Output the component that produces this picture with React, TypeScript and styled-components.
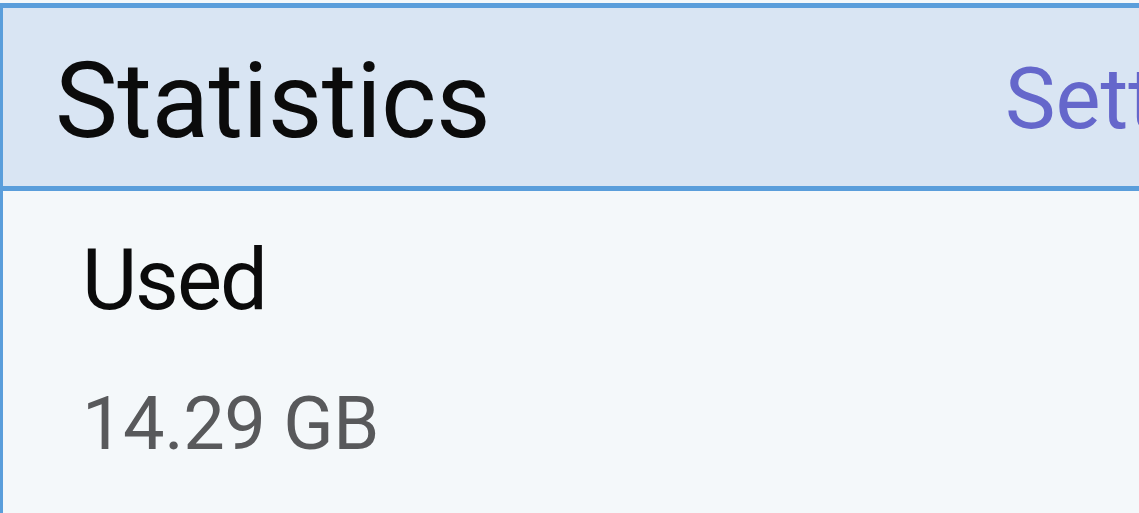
import styled, { createGlobalStyle } from 'styled-components';

const GlobalStyle = createGlobalStyle`
  html, body {
    margin: 0;
    padding: 0;
    background: #f4f8fa;
    overflow: hidden;
  }
  body {
    font-family: Roboto, "Noto Sans", "Liberation Sans", sans-serif;
  }
`;

function App() {
  return (
    <>
      <GlobalStyle />
      <StPage>
        <StPanel>
          <StHeader>
            <StTitle>Statistics</StTitle>
            <StAction>Settings</StAction>
          </StHeader>
          <StBody>
            <StLabel>Used</StLabel>
            <StValue>14.29 GB</StValue>
          </StBody>
        </StPanel>
      </StPage>
    </>
  );
}

export default App;

const StPage = styled.div`
  padding-top: 3px;
  min-height: 510px;
  background: #f4f8fa;
`;

const StPanel = styled.div`
  border-top: 5px solid #5a9edb;
  border-left: 3px solid #5a9edb;
  min-height: 505px;
  background: #f4f8fa;
`;

const StHeader = styled.div`
  display: grid;
  grid-template-columns: 950px auto;
  align-items: center;
  height: 178px;
  padding-left: 52px;
  background: #d9e5f3;
  border-bottom: 5px solid #5a9edb;
  white-space: nowrap;
  overflow: hidden;
`;

const StTitle = styled.h1`
  margin: 7px 0 0;
  font-size: 106px;
  font-weight: 400;
  line-height: 1;
  letter-spacing: -0.6px;
  color: #0b0b0b;
`;

const StAction = styled.span`
  margin-top: 4px;
  font-size: 85px;
  line-height: 1;
  color: #6567cb;
`;

const StBody = styled.div`
  display: flex;
  flex-direction: column;
  gap: 64px;
  padding: 47px 0 0 79px;
`;

const StLabel = styled.div`
  font-size: 85px;
  line-height: 1;
  letter-spacing: -2px;
  color: #0b0b0b;
`;

const StValue = styled.div`
  font-size: 74px;
  line-height: 1;
  letter-spacing: -0.5px;
  color: #58595b;
`;
